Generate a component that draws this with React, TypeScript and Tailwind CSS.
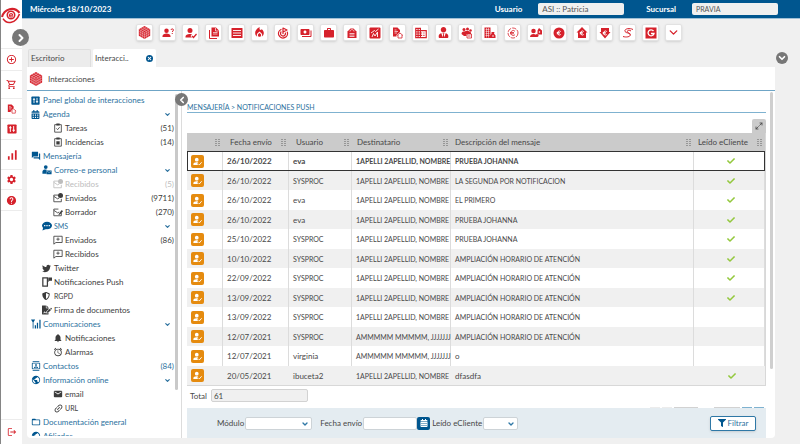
import type { ReactNode } from "react";
import {
  MdAddCircleOutline, MdAlarm, MdBusiness, MdEmail, MdFolderOpen, MdHelp, MdLink, MdLocalFireDepartment,
  MdLogout, MdNotifications, MdOutlineShoppingCart, MdPayments, MdPublic, MdSettings,
  MdSignalCellularAlt, MdWork, MdOutlineContacts, MdForum,
} from "react-icons/md";
import { FaTwitter, FaShieldAlt, FaUserTie, FaCheck, FaFilter, FaCalendarAlt, FaFileSignature } from "react-icons/fa";
import { ChevronDown, ChevronLeft, ChevronRight, Goal, Maximize2, X } from "lucide-react";

type DrawingProps = { className?: string; children: ReactNode };

function Drawing({ className = "size-3", children }: DrawingProps) {
  return (
    <svg viewBox="0 0 24 24" className={className} fill="currentColor" aria-hidden="true">
      {children}
    </svg>
  );
}

const line = { fill: "none", stroke: "currentColor", strokeWidth: 2 };
const person = <path d="M9 3a4.500 4.500 0 1 0 0 9 4.500 4.500 0 0 0 0-9ZM1 20v-2c0-3 4-5 8-5s8 2 8 5v2Z" />;
const euroStroke = (
  <path d="M15.500 9a4 4 0 1 0 0 6M7.500 11h6M7.500 13.500h6" fill="none" stroke="#fff" strokeWidth="1.800" />
);

const Cube = ({ className = "size-[13px]" }: { className?: string }) => (
  <Drawing className={className}>
    <path d="M12 0 22.500 6v12L12 24 1.500 18V6Z" />
    <path
      d="M12 12 1.500 6M12 12l10.500-6M12 12v12M8.500 2l10.500 6v12M5 4l10.500 6v12M15.500 2 5 8v12M19 4 8.500 10v12M1.500 10 12 16l10.500-6M1.500 14 12 20l10.500-6"
      fill="none"
      stroke="#fff"
      strokeWidth="0.600"
    />
  </Drawing>
);
const PersonQuestion = () => (
  <Drawing>{person}<path {...line} d="M18 6c0-3 5-3 5 0 0 2-2.500 2-2.500 4M20.500 12v2" /></Drawing>
);
const PersonCheck = ({ className = "size-3" }: { className?: string }) => (
  <Drawing className={className}>
    <path d="M10 2a5 5 0 1 0 0 10 5 5 0 0 0 0-10ZM1 21v-2c0-3 4-5 8-5 2 0 3.500.3 5 1l-3 3 3 3Z" />
    <path {...line} strokeWidth="2.500" d="m14 18 3 3 6-7" />
  </Drawing>
);
const Docs = () => (
  <Drawing>
    <path d="M7 1h9l6 6v12H7Z" />
    <path {...line} d="M3 6v17h15" />
    <path d="M15 2v6h6M10 11h9M10 14h9" fill="none" stroke="#fff" strokeWidth="1.300" />
  </Drawing>
);
const List = () => (
  <Drawing>
    <rect x="1" y="2" width="22" height="20" rx="1" />
    <path d="M4 7h16M4 12h16M4 17h16" stroke="#fff" strokeWidth="1.800" />
  </Drawing>
);
const Bag = () => (
  <Drawing>
    <path d="M3 9 9 3h6l6 6v13H3Z" />
    <path d="M8 9c0-5 8-5 8 0M7 13h10M7 16h10M7 19h10" fill="none" stroke="#fff" strokeWidth="1.400" />
  </Drawing>
);
const ChartSquare = () => (
  <Drawing>
    <rect x="1" y="1" width="22" height="22" rx="2" />
    <path d="m4 12 7-5 2 2 6-5M6 20l3-7 3 5 5-8v10" fill="none" stroke="#fff" strokeWidth="1.800" />
  </Drawing>
);
const DocHouse = ({ className = "size-3" }: { className?: string }) => (
  <Drawing className={className}>
    <path d="M2 1h9l5 5v4l-7 6v3H2Z" />
    <path {...line} strokeWidth="1.600" d="m10 17 6-5 6 5M12 16v6h8v-6" />
    <path d="M5 6h4M5 9h7M5 12h5" stroke="#fff" strokeWidth="1.300" />
  </Drawing>
);
const PeopleDoc = () => (
  <Drawing>
    <circle cx="6" cy="5" r="3" /><circle cx="13" cy="4" r="3" /><circle cx="19" cy="7" r="2.500" />
    <path d="M1 14c0-4 3-5 5-5l4-1h5l5 3v3h-9v4H6Z" />
    <path {...line} strokeWidth="1.600" d="M12 14h9v8h-9ZM14 18h5" />
  </Drawing>
);
const BuildingBag = () => (
  <Drawing>
    <path d="M1 1h12v21H1Z" />
    <path d="M3 5h8M3 9h8M3 13h8M3 17h8M5 2v19M9 2v19" stroke="#fff" strokeWidth="1" />
    <path d="M15 10h6l-1 3 3 4v5h-11v-5l3-4Z" />
    <circle cx="18" cy="18" r="1.600" fill="#fff" />
  </Drawing>
);
const EuroCycle = () => (
  <Drawing>
    <circle {...line} strokeWidth="1.600" strokeDasharray="9 2" cx="12" cy="12" r="10" />
    <path {...line} d="M16 8.500a5 5 0 1 0 0 7M6 11h8M6 13.500h8" strokeWidth="1.600" />
  </Drawing>
);
const PeopleHouse = () => (
  <Drawing>
    <circle cx="7" cy="8" r="4.500" /><path d="M0 20c0-8 14-8 14 0Z" /><circle cx="14" cy="17" r="3" />
    <path d="m18 2 6 5v8h-9V7Z" /><circle cx="19" cy="10" r="1.500" fill="#fff" />
  </Drawing>
);
const EuroCircle = () => <Drawing><circle cx="12" cy="12" r="11" />{euroStroke}</Drawing>;
const EuroHouse = () => <Drawing><path d="m12 0 11 11h-3v11H4V11H1Z" />{euroStroke}</Drawing>;
const EuroDown = () => <Drawing><path d="M4 2h16v8h3L12 23 1 10h3Z" />{euroStroke}</Drawing>;
const Swirl = () => (
  <Drawing>
    <path {...line} d="M22 5C14 1 4 4 6 9c2 4 11 2 11 6 0 5-9 6-15 4M18 8c-4-3-9-1-7 2 2 2 4 2 4 5" />
  </Drawing>
);
const GSquare = () => (
  <Drawing>
    <rect x="1" y="1" width="22" height="22" />
    <path d="M17 8a6 6 0 1 0 1 5h-6" fill="none" stroke="#fff" strokeWidth="2.600" />
  </Drawing>
);
const Sliders = ({ className = "size-3" }: { className?: string }) => (
  <Drawing className={className}>
    <rect x="1" y="1" width="22" height="22" rx="2" />
    <path d="M8 5v14M16 5v14M5 9h6M13 15h6" stroke="#fff" strokeWidth="2.400" />
  </Drawing>
);
const Clip = ({ cross = false }: { cross?: boolean }) => (
  <Drawing className="size-[10px]">
    <path {...line} d="M4 4h16v18H4Z" /><path d="M8 1h8v5H8Z" />
    {cross ? <path d="M8 10h8v8H8Z" /> : <path {...line} d="m8 13 3 3 5-6" />}
  </Drawing>
);
const Envelope = ({ kind }: { kind: "badge" | "pen" }) => (
  <Drawing className="size-[10px]">
    <path {...line} d="M13 5H2v16h18v-7M2 8l9 6 4-2" />
    {kind === "badge" ? <circle cx="18" cy="6" r="6" /> : <path d="m14 16 7-9 3 3-7 8-4 1Z" />}
  </Drawing>
);
const Bubble = () => (
  <Drawing className="size-[10px]">
    <path {...line} d="M2 3h20v15H7l-5 4Z" /><path d="M11 6h2v3h3v2h-3v3h-2v-3H8V9h3Z" />
  </Drawing>
);
const RoundBubble = () => (
  <Drawing className="size-[10px]">
    <ellipse cx="12" cy="11" rx="12" ry="9" /><path d="M3 15 1 23l9-4Z" />
    <path d="M5 11h3M10.500 11h3M16 11h3" stroke="#fff" strokeWidth="3" />
  </Drawing>
);
const PersonMail = () => (
  <Drawing className="size-[10px]">
    <circle cx="9" cy="5" r="4.500" /><path d="M1 21v-5c0-5 6-6 10-5v10Z" /><path d="M11 13h12v9H11Z" />
    <path d="m12 15 5 3 5-3" fill="none" stroke="#fff" />
  </Drawing>
);
const PhonePush = () => (
  <Drawing className="size-[10px]">
    <path {...line} strokeWidth="3" d="M2 2h11v20H2Z" /><path d="M15 1h9v8h-6l-3 3Z" />
  </Drawing>
);
const Antenna = () => (
  <Drawing className="size-[10px]">
    <path d="M0 1h10L6 8v15H4V8ZM9 15h3v8H9ZM14 9h3v14h-3ZM20 2h3v21h-3Z" />
  </Drawing>
);
const Logo = () => (
  <svg viewBox="0 0 36 34" className="h-[18px] w-5" aria-hidden="true">
    <g fill="none" stroke="#d6212b">
      <path d="M1 21C5 5 24 0 34 13" strokeWidth="4" />
      <path d="M3 24c7 12 24 9 31-9" strokeWidth="3" />
      <circle cx="18" cy="17" r="7" strokeWidth="3" />
      <path d="M15 17.500h6c0-5-6-4-6 0s4 4 6 2" strokeWidth="2" />
    </g>
  </svg>
);

const tools: [string, ReactNode][] = [
  ["Interacciones", <Cube />],
  ["Consultar cliente", <PersonQuestion />],
  ["Validar cliente", <PersonCheck />],
  ["Documentos", <Docs />],
  ["Listados", <List />],
  ["Siniestros", <MdLocalFireDepartment className="size-[13px]" />],
  ["Objetivos", <Goal className="size-3" strokeWidth={2.5} />],
  ["Pagos", <MdPayments className="size-3" />],
  ["Cartera", <MdWork className="size-3" />],
  ["Compras", <Bag />],
  ["Indicadores", <ChartSquare />],
  ["Hogar", <DocHouse />],
  ["Empresas", <MdBusiness className="size-[14px]" />],
  ["Agentes", <FaUserTie className="size-[11px]" />],
  ["Grupos", <PeopleDoc />],
  ["Entidades", <BuildingBag />],
  ["Liquidaciones", <EuroCycle />],
  ["Colaboradores", <PeopleHouse />],
  ["Cobros", <EuroCircle />],
  ["Ingresos", <EuroHouse />],
  ["Gastos", <EuroDown />],
  ["Servicios", <Swirl />],
  ["Gestor", <GSquare />],
  ["Más", <ChevronDown className="size-[13px]" strokeWidth={2.5} />],
];

const rail: [string, string, ReactNode][] = [
  ["Añadir", "h-[22px]", <MdAddCircleOutline className="size-[11px]" />],
  ["Carrito", "h-[28px]", <MdOutlineShoppingCart className="size-[11px]" />],
  ["Hogar", "h-5", <DocHouse className="size-[10px]" />],
  ["Panel", "h-[21px]", <Sliders className="size-[10px]" />],
  ["Estadísticas", "h-[30px]", <MdSignalCellularAlt className="size-[14px]" />],
  ["Ajustes", "h-5", <MdSettings className="size-[11px]" />],
  ["Ayuda", "h-[21px]", <MdHelp className="size-[11px]" />],
];

type Item = { label: string; level: 0 | 1 | 2; icon: ReactNode; blue?: boolean; faded?: boolean; count?: number; open?: boolean };

const ic = "size-[10px]";
const menu: Item[] = [
  { label: "Panel global de interacciones", level: 0, blue: true, icon: <Sliders className="size-[9px]" /> },
  { label: "Agenda", level: 0, blue: true, open: true, icon: <FaCalendarAlt className="size-[9px]" /> },
  { label: "Tareas", level: 2, icon: <Clip />, count: 51 },
  { label: "Incidencias", level: 2, icon: <Clip cross />, count: 14 },
  { label: "Mensajería", level: 0, blue: true, icon: <MdForum className={ic} /> },
  { label: "Correo-e personal", level: 1, blue: true, open: true, icon: <PersonMail /> },
  { label: "Recibidos", level: 2, faded: true, icon: <Envelope kind="badge" />, count: 5 },
  { label: "Enviados", level: 2, icon: <Envelope kind="badge" />, count: 9711 },
  { label: "Borrador", level: 2, icon: <Envelope kind="pen" />, count: 270 },
  { label: "SMS", level: 1, blue: true, open: true, icon: <RoundBubble /> },
  { label: "Enviados", level: 2, icon: <Bubble />, count: 86 },
  { label: "Recibidos", level: 2, icon: <Bubble /> },
  { label: "Twitter", level: 1, icon: <FaTwitter className="size-[9px]" /> },
  { label: "Notificaciones Push", level: 1, icon: <PhonePush /> },
  { label: "RGPD", level: 1, icon: <FaShieldAlt className="size-2" /> },
  { label: "Firma de documentos", level: 1, icon: <FaFileSignature className="size-[10px]" /> },
  { label: "Comunicaciones", level: 0, blue: true, open: true, icon: <Antenna /> },
  { label: "Notificaciones", level: 2, icon: <MdNotifications className={ic} /> },
  { label: "Alarmas", level: 2, icon: <MdAlarm className={ic} /> },
  { label: "Contactos", level: 0, blue: true, icon: <MdOutlineContacts className={ic} />, count: 84 },
  { label: "Información online", level: 0, blue: true, open: true, icon: <MdPublic className={ic} /> },
  { label: "email", level: 2, icon: <MdEmail className={ic} /> },
  { label: "URL", level: 2, icon: <MdLink className="size-[11px] -rotate-45" /> },
  { label: "Documentación general", level: 0, blue: true, icon: <MdFolderOpen className={ic} /> },
  { label: "Afiliados", level: 0, blue: true, icon: <MdPublic className={ic} /> },
];

const indent = { 0: "pl-1", 1: "pl-[15px]", 2: "pl-[26px]" };

const sizeOf = (text: string) => (text === text.toUpperCase() ? "text-[7px]" : "text-[8px]");

type Row = [string, string, string, string, boolean];
const A = "1APELLI 2APELLID, NOMBRE";
const M = "AMMMMM MMMMM, JJJJJJJ";
const H = "AMPLIACIÓN HORARIO DE ATENCIÓN";
const rows: Row[] = [
  ["26/10/2022", "eva", A, "PRUEBA JOHANNA", true],
  ["26/10/2022", "SYSPROC", A, "LA SEGUNDA POR NOTIFICACION", true],
  ["26/10/2022", "eva", A, "EL PRIMERO", true],
  ["26/10/2022", "eva", A, "PRUEBA JOHANNA", true],
  ["25/10/2022", "SYSPROC", A, "PRUEBA JOHANNA", true],
  ["10/10/2022", "SYSPROC", A, H, true],
  ["22/09/2022", "SYSPROC", A, H, true],
  ["13/09/2022", "SYSPROC", A, H, true],
  ["13/09/2022", "SYSPROC", A, H, false],
  ["12/07/2021", "SYSPROC", M, H, false],
  ["12/07/2021", "virginia", M, "o", false],
  ["20/05/2021", "ibuceta2", A, "dfasdfa", true],
];

const columns: [string, string, string][] = [
  ["", "w-[36px]", "pl-1"],
  ["Fecha envío", "w-[66px]", "pl-[7px]"],
  ["Usuario", "w-[63px]", "pl-[7px]"],
  ["Destinatario", "w-[99px]", "pl-[5px]"],
  ["Descripción del mensaje", "", "pl-1"],
  ["Leído eCliente", "w-[71px]", "pl-1"],
];

const Grip = () => (
  <svg viewBox="0 0 5 7" className="h-[7px] w-[5px] shrink-0" fill="#969696" aria-hidden="true">
    <path d="M0 0h2v1H0ZM3 0h2v1H3ZM0 2h2v1H0ZM3 2h2v1H3ZM0 4h2v1H0ZM3 4h2v1H3ZM0 6h2v1H0ZM3 6h2v1H3Z" />
  </svg>
);

function Select({ id, className }: { id: string; className: string }) {
  return (
    <span className={`relative block ${className}`}>
      <select id={id} className="block h-[13px] w-full appearance-none rounded-xs border border-[#cdd3d7] bg-white px-1 text-[8px]">
        <option></option>
      </select>
      <ChevronDown className="pointer-events-none absolute top-[3px] right-[3px] size-2 text-[#2f78a6]" strokeWidth={4} />
    </span>
  );
}

export default function App() {
  return (
    <div className="flex h-screen overflow-hidden bg-[#f0f0f0] text-[8px] leading-[10px] text-[#484848] [font-family:Lato,'Noto_Sans',sans-serif]">
      <nav className="relative flex w-[22px] shrink-0 flex-col border-l border-[#858585] bg-white text-[#d6212b]" aria-label="Accesos">
        <div className="flex h-[49px] items-start border-b border-[#ececec] pt-[6px]"><Logo /></div>
        {rail.map(([label, height, icon]) => (
          <button key={label} aria-label={label} className={`flex shrink-0 items-center justify-center border-b border-[#ececec] ${height}`}>
            {icon}
          </button>
        ))}
        <button aria-label="Salir" className="mt-auto flex h-[25px] items-center justify-center border-t border-[#ececec]">
          <MdLogout className="size-[10px]" />
        </button>
        <button aria-label="Expandir menú" className="absolute top-[29px] left-[11px] z-10 flex size-[17px] items-center justify-center rounded-full bg-[#777] text-white">
          <ChevronRight className="size-3" strokeWidth={4} />
        </button>
      </nav>

      <div className="flex min-w-0 grow flex-col">
        <header className="flex h-[19px] shrink-0 items-center border-b border-[#9fc0d6] bg-[#00568f] pr-[22px] pl-2 font-bold text-white">
          <span className="grow">Miércoles 18/10/2023</span>
          <label htmlFor="usuario" className="mr-4">Usuario</label>
          <input id="usuario" readOnly value="ASI :: Patricia" className="mr-[22px] h-3 w-[86px] rounded-xs bg-[#f0f0f0] px-1 text-[8px] font-normal text-[#555]" />
          <label htmlFor="sucursal" className="mr-4">Sucursal</label>
          <input id="sucursal" readOnly value="PRAVIA" className="h-3 w-[86px] rounded-xs bg-[#f0f0f0] px-1 text-[7px] font-normal text-[#555]" />
        </header>

        <div className="flex h-[30px] shrink-0 justify-center gap-[6px] pt-[5px] pr-1">
          {tools.map(([label, icon]) => (
            <button key={label} aria-label={label} className="flex size-[17px] items-center justify-center rounded-xs border border-[#e2e2e2] bg-white text-[#d6212b] shadow-sm">
              {icon}
            </button>
          ))}
        </div>

        <div className="flex h-[18px] shrink-0 items-end gap-[2px] pr-1 pl-[6px]">
          <button className="h-full w-[63px] rounded-t-xs border border-b-0 border-[#dedede] bg-[#ececec] px-[2px] pb-[2px] text-left">Escritorio</button>
          <div className="flex h-full w-[63px] items-center rounded-t-xs bg-white pr-[3px] pl-[2px]">
            <button className="grow text-left">Interacci..</button>
            <button aria-label="Cerrar pestaña" className="flex size-[7px] items-center justify-center rounded-full bg-[#00568f] text-white">
              <X className="size-[5px]" strokeWidth={5} />
            </button>
          </div>
          <button aria-label="Desplegar" className="mr-[8px] mb-[3px] ml-auto flex size-3 items-center justify-center rounded-full bg-[#777] text-white">
            <ChevronDown className="size-[10px]" strokeWidth={4} />
          </button>
        </div>

        <main className="mr-[25px] mb-[6px] ml-[5px] flex min-h-0 grow flex-col overflow-hidden rounded-b bg-white">
          <h1 className="flex h-6 shrink-0 items-center gap-[5px] border-b border-[#6fa5c6] pl-[2px]">
            <Cube className="size-[14px] text-[#d6212b]" />
            Interacciones
          </h1>

          <div className="flex min-h-0 grow">
            <aside className="relative w-[155px] shrink-0 border-r border-[#dcdcdc] pb-[2px]">
              <div className="flex h-full">
                <ul className="grow overflow-hidden pt-[2px] pr-px">
                  {menu.map((item, i) => (
                    <li key={i}>
                      <button className={`flex h-[14px] w-full items-center ${indent[item.level]} ${item.blue ? "text-[#2b719e]" : item.faded ? "text-[#bdbdbd]" : "text-[#3c3c3c]"}`}>
                        <span className={`flex w-3 shrink-0 items-center ${item.blue ? "text-[#00568f]" : ""}`}>{item.icon}</span>
                        <span className={`grow text-left whitespace-nowrap ${sizeOf(item.label)}`}>{item.label}</span>
                        {item.count !== undefined && <span>({item.count})</span>}
                        {item.open && <ChevronDown className="mr-[3px] size-[7px]" strokeWidth={4} />}
                      </button>
                    </li>
                  ))}
                </ul>
                <div className="mt-[3px] mr-[3px] h-[296px] w-[3px] shrink-0 rounded-full bg-[#c9c9c9]" />
              </div>
              <button aria-label="Contraer panel" className="absolute top-[2px] -right-[7px] flex size-[13px] items-center justify-center rounded-full bg-[#777] text-white">
                <ChevronLeft className="size-[10px]" strokeWidth={4} />
              </button>
            </aside>

            <section className="flex min-w-0 grow flex-col pl-[5px]">
              <h2 className="mt-[11px] h-[11px] shrink-0 border-b border-[#7fb2d0] text-[7px] text-[#2b719e]">MENSAJERÍA &gt; NOTIFICACIONES PUSH</h2>
              <button aria-label="Ampliar tabla" className="mt-[6px] flex h-[14px] w-[14px] shrink-0 items-center justify-center self-end rounded-t-xs bg-[#cbcbcb]">
                <Maximize2 className="size-2" strokeWidth={2.5} />
              </button>

              <table className="w-full table-fixed border-separate border-spacing-0 border-r border-b border-[#d8d8d8] text-left">
                <thead>
                  <tr className="h-[18px] bg-[#cbcbcb]">
                    {columns.map(([name, width, pad]) => (
                      <th key={name} className={`p-0 font-normal ${width}`}>
                        <div className={`flex items-center justify-between pr-[3px] ${pad}`}>
                          <span>{name}</span>
                          <Grip />
                        </div>
                      </th>
                    ))}
                  </tr>
                </thead>
                <tbody>
                  {rows.map(([date, user, to, text, read], i) => (
                    <tr
                      key={i}
                      className={`odd:h-5 even:h-[19px] even:bg-[#f0f0f0] ${i === 0 ? "font-bold outline-[1px] -outline-offset-1 outline-[#333]" : ""} *:border-r *:border-[#dcdcdc] *:p-0 *:pl-1 *:whitespace-nowrap last:*:border-r-0`}
                    >
                      <td>
                        <button aria-label="Ver cliente" className="flex size-[13px] items-center justify-center rounded-xs bg-[#e58b0f] text-white">
                          <PersonCheck className="size-[9px]" />
                        </button>
                      </td>
                      <td>{date}</td>
                      <td className={sizeOf(user)}>{user}</td>
                      <td className={sizeOf(to)}>{to}</td>
                      <td className={sizeOf(text)}>{text}</td>
                      <td>{read && <FaCheck className="mx-auto size-2 text-[#93c83d]" aria-label="Leído" />}</td>
                    </tr>
                  ))}
                </tbody>
              </table>

              <div className="mt-[3px] flex shrink-0 items-center gap-1 pl-[3px]">
                <label htmlFor="total">Total</label>
                <input id="total" readOnly value="61" className="h-[13px] w-[97px] rounded-xs border border-[#d2d2d2] bg-[#f0f0f0] px-[2px] text-[8px]" />
              </div>

              <div className="mt-auto flex h-px shrink-0 justify-end gap-[2px] pr-[2px]">
                <span className="w-[10px] bg-[#ececec]" />
                <span className="w-[10px] bg-[#ececec]" />
                <span className="mr-[14px] w-6 bg-[#d2d2d2]" />
                <span className="w-[26px] bg-[#d2d2d2]" />
                <span className="w-[10px] bg-[#7fb2d0]" />
                <span className="w-[10px] bg-[#7fb2d0]" />
              </div>
              <form className="flex h-[30px] shrink-0 items-center bg-[#e4ecf1] pr-[10px] pl-[30px]">
                <label htmlFor="modulo" className="mr-px">Módulo</label>
                <Select id="modulo" className="mr-2 w-[67px]" />
                <label htmlFor="fecha" className="mr-px">Fecha envío</label>
                <input id="fecha" className="h-[13px] w-[54px] rounded-xs border border-[#cdd3d7] bg-white px-1 text-[8px]" />
                <button type="button" aria-label="Abrir calendario" className="mr-[2px] flex size-[13px] items-center justify-center rounded-xs bg-[#00568f] text-white">
                  <FaCalendarAlt className="size-2" />
                </button>
                <label htmlFor="leido" className="mr-px">Leído eCliente</label>
                <Select id="leido" className="w-[35px]" />
                <button type="button" className="ml-auto flex h-[15px] w-[46px] items-center justify-center gap-[2px] rounded-xs border border-[#2f78a6] bg-white text-[#2b719e] shadow-sm">
                  <FaFilter className="size-2 text-[#00568f]" />
                  Filtrar
                </button>
              </form>
            </section>

            <div className="mt-px mr-[2px] ml-1 h-[277px] w-[3px] shrink-0 rounded-full bg-[#cfcfcf]" />
          </div>
        </main>
      </div>
    </div>
  );
}
